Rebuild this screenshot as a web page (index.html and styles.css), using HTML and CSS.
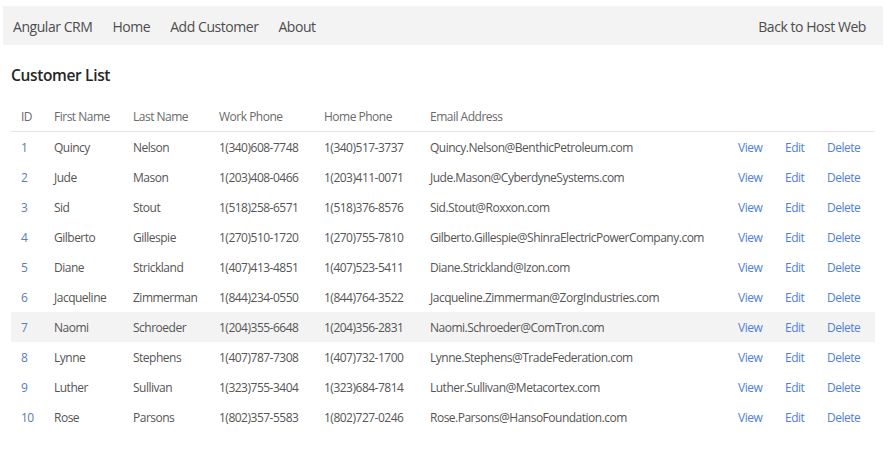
FILE: index.html
```html
<!DOCTYPE html>
<html lang="en">
<head>
<meta charset="utf-8">
<title>Angular CRM</title>
<link rel="stylesheet" href="styles.css">
</head>
<body>
<nav class="navbar">
  <div class="nav-left">
    <a class="brand" href="#">Angular CRM</a>
    <a class="nav-link" href="#">Home</a>
    <a class="nav-link" href="#">Add Customer</a>
    <a class="nav-link" href="#">About</a>
  </div>
  <a class="nav-link host" href="#">Back to Host Web</a>
</nav>
<main class="content">
  <h3 class="title">Customer List</h3>
  <table class="grid">
    <colgroup>
      <col class="c-id"><col class="c-first"><col class="c-last"><col class="c-work"><col class="c-home"><col class="c-email"><col class="c-view"><col class="c-edit"><col class="c-del">
    </colgroup>
    <thead>
      <tr><th>ID</th><th>First Name</th><th>Last Name</th><th>Work Phone</th><th>Home Phone</th><th>Email Address</th><th></th><th></th><th></th></tr>
    </thead>
    <tbody>
      <tr><td class="id">1</td><td>Quincy</td><td>Nelson</td><td>1(340)608-7748</td><td>1(340)517-3737</td><td>Quincy.Nelson@BenthicPetroleum.com</td><td><a href="#">View</a></td><td><a href="#">Edit</a></td><td><a href="#">Delete</a></td></tr>
      <tr><td class="id">2</td><td>Jude</td><td>Mason</td><td>1(203)408-0466</td><td>1(203)411-0071</td><td>Jude.Mason@CyberdyneSystems.com</td><td><a href="#">View</a></td><td><a href="#">Edit</a></td><td><a href="#">Delete</a></td></tr>
      <tr><td class="id">3</td><td>Sid</td><td>Stout</td><td>1(518)258-6571</td><td>1(518)376-8576</td><td>Sid.Stout@Roxxon.com</td><td><a href="#">View</a></td><td><a href="#">Edit</a></td><td><a href="#">Delete</a></td></tr>
      <tr><td class="id">4</td><td>Gilberto</td><td>Gillespie</td><td>1(270)510-1720</td><td>1(270)755-7810</td><td>Gilberto.Gillespie@ShinraElectricPowerCompany.com</td><td><a href="#">View</a></td><td><a href="#">Edit</a></td><td><a href="#">Delete</a></td></tr>
      <tr><td class="id">5</td><td>Diane</td><td>Strickland</td><td>1(407)413-4851</td><td>1(407)523-5411</td><td>Diane.Strickland@Izon.com</td><td><a href="#">View</a></td><td><a href="#">Edit</a></td><td><a href="#">Delete</a></td></tr>
      <tr><td class="id">6</td><td>Jacqueline</td><td>Zimmerman</td><td>1(844)234-0550</td><td>1(844)764-3522</td><td>Jacqueline.Zimmerman@ZorgIndustries.com</td><td><a href="#">View</a></td><td><a href="#">Edit</a></td><td><a href="#">Delete</a></td></tr>
      <tr class="hover"><td class="id">7</td><td>Naomi</td><td>Schroeder</td><td>1(204)355-6648</td><td>1(204)356-2831</td><td>Naomi.Schroeder@ComTron.com</td><td><a href="#">View</a></td><td><a href="#">Edit</a></td><td><a href="#">Delete</a></td></tr>
      <tr><td class="id">8</td><td>Lynne</td><td>Stephens</td><td>1(407)787-7308</td><td>1(407)732-1700</td><td>Lynne.Stephens@TradeFederation.com</td><td><a href="#">View</a></td><td><a href="#">Edit</a></td><td><a href="#">Delete</a></td></tr>
      <tr><td class="id">9</td><td>Luther</td><td>Sullivan</td><td>1(323)755-3404</td><td>1(323)684-7814</td><td>Luther.Sullivan@Metacortex.com</td><td><a href="#">View</a></td><td><a href="#">Edit</a></td><td><a href="#">Delete</a></td></tr>
      <tr><td class="id">10</td><td>Rose</td><td>Parsons</td><td>1(802)357-5583</td><td>1(802)727-0246</td><td>Rose.Parsons@HansoFoundation.com</td><td><a href="#">View</a></td><td><a href="#">Edit</a></td><td><a href="#">Delete</a></td></tr>
    </tbody>
  </table>
</main>
</body>
</html>
```
FILE: styles.css
```css
html, body {
  margin: 0;
  padding: 0;
  background: #fff;
}
body {
  font-family: "Open Sans", "Noto Sans", "Liberation Sans", sans-serif;
  color: #555;
}
a { text-decoration: none; }

.navbar {
  box-sizing: border-box;
  display: flex;
  justify-content: space-between;
  align-items: center;
  margin: 6px 6px 0 3px;
  height: 39px;
  padding: 1px 17px 0 10px;
  background: #f3f3f3;
  font-size: 14px;
  font-weight: 400;
}
.nav-left {
  display: flex;
  align-items: center;
  gap: 20px;
}
.navbar a {
  color: #4d4d4d;
  letter-spacing: -0.45px;
}

.content {
  padding: 0 14px 0 11px;
}
.title {
  margin: 19px 0 0;
  font-size: 15.5px;
  font-weight: 600;
  color: #262626;
  line-height: 22px;
  letter-spacing: -0.35px;
}

.grid {
  margin-top: 15px;
  width: 864px;
  table-layout: fixed;
  border-collapse: collapse;
  font-size: 12px;
  letter-spacing: -0.5px;
}
.c-id { width: 33px; }
.c-first { width: 79px; }
.c-last { width: 86px; }
.c-work { width: 105px; }
.c-home { width: 106px; }
.c-email { width: 308px; }
.c-view { width: 47px; }
.c-edit { width: 42px; }
.c-del { width: 58px; }

.grid th {
  height: 30px;
  padding: 0 0 0 10px;
  text-align: left;
  font-weight: 400;
  color: #6a6a6a;
  border-bottom: 1px solid #e4e4e4;
  white-space: nowrap;
}
.grid td {
  height: 30px;
  padding: 0 0 0 10px;
  color: #555;
  white-space: nowrap;
}
.grid td.id { color: #5a7cb8; }
.grid td a { color: #5080d8; }
.grid tr.hover td { background: #f3f3f3; }
```
